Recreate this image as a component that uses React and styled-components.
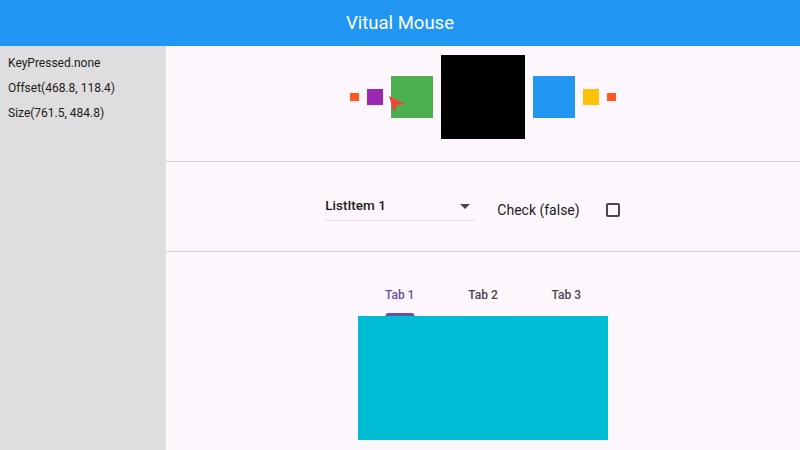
import React from 'react';
import styled, { createGlobalStyle } from 'styled-components';

const GlobalStyle = createGlobalStyle`
  html, body {
    margin: 0;
    padding: 0;
    width: 800px;
    height: 450px;
    overflow: hidden;
    font-family: Roboto, "Liberation Sans", sans-serif;
  }
`;

const shapes = [
  { size: 8.3, color: '#ff5722' },
  { size: 16.7, color: '#9c27b0' },
  { size: 41.7, color: '#4caf50', cursor: true },
  { size: 84, color: '#000000' },
  { size: 41.7, color: '#2196f3' },
  { size: 16.7, color: '#ffc107' },
  { size: 8.3, color: '#ff5722' },
];

function App() {
  return (
    <Page>
      <GlobalStyle />
      <AppBar>Vitual Mouse</AppBar>
      <Body>
        <Sidebar>
          <InfoLine>KeyPressed.none</InfoLine>
          <InfoLine>Offset(468.8, 118.4)</InfoLine>
          <InfoLine>Size(761.5, 484.8)</InfoLine>
        </Sidebar>
        <Main>
          {/* 색상 박스 줄 */}
          <ShapeSection>
            {shapes.map((s, i) => (
              <Square key={i} $size={s.size} $color={s.color}>
                {s.cursor && (
                  <Cursor width="18" height="18" viewBox="0 0 18 18">
                    <polygon points="0,0 16,8 8,9 5,16" fill="#f44336" />
                  </Cursor>
                )}
              </Square>
            ))}
          </ShapeSection>
          <FormSection>
            <Dropdown>
              <DropdownText>ListItem 1</DropdownText>
              <Caret />
            </Dropdown>
            <CheckLabel>Check (false)</CheckLabel>
            <CheckBox />
          </FormSection>
          <TabSection>
            <TabBar>
              <Tab $active>
                Tab 1
                <Indicator />
              </Tab>
              <Tab>Tab 2</Tab>
              <Tab>Tab 3</Tab>
            </TabBar>
            <TabPanel />
          </TabSection>
        </Main>
      </Body>
    </Page>
  );
}

export default App;

const Page = styled.div`
  width: 800px;
  height: 450px;
  display: flex;
  flex-direction: column;
`;

const AppBar = styled.header`
  height: 46px;
  flex-shrink: 0;
  background-color: #2196f3;
  color: #ffffff;
  font-size: 18.5px;
  display: flex;
  align-items: center;
  justify-content: center;
`;

const Body = styled.div`
  flex: 1;
  display: flex;
  min-height: 0;
`;

const Sidebar = styled.aside`
  width: 166px;
  flex-shrink: 0;
  background-color: #dfdde0;
  padding: 5px 0 0 8px;
  box-sizing: border-box;
`;

const InfoLine = styled.div`
  font-size: 12px;
  color: #1d1b20;
  line-height: 25px;
`;

const Main = styled.main`
  flex: 1;
  background-color: #fdf7fd;
  display: flex;
  flex-direction: column;
`;

const ShapeSection = styled.section`
  height: 116px;
  box-sizing: border-box;
  padding-top: 9px;
  border-bottom: 1px solid #d8d3d9;
  display: flex;
  justify-content: center;
  align-items: flex-start;
  gap: 8px;
`;

const Square = styled.div`
  position: relative;
  width: ${(p) => p.$size}px;
  height: ${(p) => p.$size}px;
  margin-top: ${(p) => (84 - p.$size) / 2}px;
  background-color: ${(p) => p.$color};
  flex-shrink: 0;
`;

const Cursor = styled.svg`
  position: absolute;
  left: -2px;
  top: 20px;
`;

const FormSection = styled.section`
  height: 90px;
  box-sizing: border-box;
  border-bottom: 1px solid #d8d3d9;
  display: flex;
  justify-content: center;
  align-items: center;
  padding: 6px 21px 0 0;
`;

const Dropdown = styled.div`
  width: 150px;
  height: 30px;
  margin-top: -8px;
  box-sizing: border-box;
  border-bottom: 1px solid #e3dee4;
  display: flex;
  align-items: center;
  justify-content: space-between;
  padding-right: 5px;
`;

const DropdownText = styled.span`
  font-size: 13.5px;
  font-weight: 500;
  color: #1d1b20;
`;

const Caret = styled.span`
  width: 0;
  height: 0;
  margin-top: 2px;
  border-left: 5px solid transparent;
  border-right: 5px solid transparent;
  border-top: 5px solid #49454f;
`;

const CheckLabel = styled.span`
  margin-left: 22px;
  font-size: 14px;
  color: #1d1b20;
`;

const CheckBox = styled.span`
  margin-left: 26px;
  width: 14px;
  height: 14px;
  border: 2px solid #49454f;
  border-radius: 2px;
  box-sizing: border-box;
`;

const TabSection = styled.section`
  flex: 1;
  display: flex;
  flex-direction: column;
  align-items: center;
  padding-top: 18px;
`;

const TabBar = styled.div`
  width: 250px;
  height: 46px;
  display: flex;
`;

const Tab = styled.div`
  position: relative;
  flex: 1;
  display: flex;
  align-items: center;
  justify-content: center;
  padding-top: 4px;
  font-size: 12px;
  font-weight: 500;
  color: ${(p) => (p.$active ? '#6750a4' : '#49454f')};
`;

const Indicator = styled.span`
  position: absolute;
  bottom: 0;
  left: 50%;
  transform: translateX(-50%);
  width: 29px;
  height: 3px;
  border-radius: 3px 3px 0 0;
  background-color: #6750a4;
`;

const TabPanel = styled.div`
  width: 250px;
  height: 124px;
  background-color: #00bcd4;
`;
